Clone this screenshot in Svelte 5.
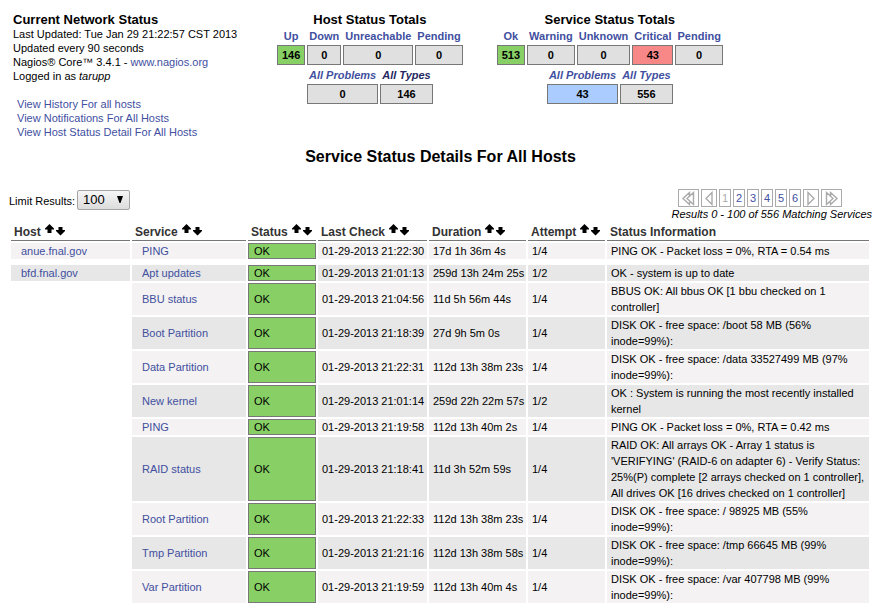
<script>
  const hostTotals = {
    title: 'Host Status Totals',
    items: [['Up', 146, 'ok'], ['Down', 0], ['Unreachable', 0], ['Pending', 0]],
    sums: [['All Problems', 0], ['All Types', 146, '', 'visited']]
  };
  const serviceTotals = {
    title: 'Service Status Totals',
    items: [['Ok', 513, 'ok'], ['Warning', 0], ['Unknown', 0], ['Critical', 43, 'critical'], ['Pending', 0]],
    sums: [['All Problems', 43, 'problems'], ['All Types', 556]]
  };
  const columns = [
    ['Host', 'host'], ['Service', 'service'], ['Status', 'status'], ['Last Check', 'last'],
    ['Duration', 'duration'], ['Attempt', 'attempt'], ['Status Information', 'info']
  ];
  const hosts = [
    { name: 'anue.fnal.gov', services: [
      ['PING', '21:22:30', '17d 1h 36m 4s', '1/4', 'PING OK - Packet loss = 0%, RTA = 0.54 ms']
    ] },
    { name: 'bfd.fnal.gov', services: [
      ['Apt updates', '21:01:13', '259d 13h 24m 25s', '1/2', 'OK - system is up to date'],
      ['BBU status', '21:04:56', '11d 5h 56m 44s', '1/4', 'BBUS OK: All bbus OK [1 bbu checked on 1 controller]'],
      ['Boot Partition', '21:18:39', '27d 9h 5m 0s', '1/4', 'DISK OK - free space: /boot 58 MB (56% inode=99%):'],
      ['Data Partition', '21:22:31', '112d 13h 38m 23s', '1/4', 'DISK OK - free space: /data 33527499 MB (97% inode=99%):'],
      ['New kernel', '21:01:14', '259d 22h 22m 57s', '1/2', 'OK : System is running the most recently installed kernel'],
      ['PING', '21:19:58', '112d 13h 40m 2s', '1/4', 'PING OK - Packet loss = 0%, RTA = 0.42 ms'],
      ['RAID status', '21:18:41', '11d 3h 52m 59s', '1/4', "RAID OK: All arrays OK - Array 1 status is 'VERIFYING' (RAID-6 on adapter 6) - Verify Status: 25%(P) complete [2 arrays checked on 1 controller], All drives OK [16 drives checked on 1 controller]"],
      ['Root Partition', '21:22:33', '112d 13h 38m 23s', '1/4', 'DISK OK - free space: / 98925 MB (55% inode=99%):'],
      ['Tmp Partition', '21:21:16', '112d 13h 38m 58s', '1/4', 'DISK OK - free space: /tmp 66645 MB (99% inode=99%):'],
      ['Var Partition', '21:19:59', '112d 13h 40m 4s', '1/4', 'DISK OK - free space: /var 407798 MB (99% inode=99%):']
    ] }
  ];
  // Stripes run on across host groups.
  let n = 0;
  const groups = hosts.map((h) => ({
    name: h.name,
    rows: h.services.map((s) => ({ s, odd: n++ % 2 === 1 }))
  }));
</script>

{#snippet totals(t)}
  <section class="totals">
    <h2>{t.title}</h2>
    <table>
      <thead><tr>{#each t.items as [label]}<th><a href="#status">{label}</a></th>{/each}</tr></thead>
      <tbody><tr>{#each t.items as [, value, kind]}<td class={kind}>{value}</td>{/each}</tr></tbody>
    </table>
    <table class="sums">
      <thead><tr>{#each t.sums as [label, , , link]}<th><a href="#status" class={link}>{label}</a></th>{/each}</tr></thead>
      <tbody><tr>{#each t.sums as [, value, kind]}<td class={kind}>{value}</td>{/each}</tr></tbody>
    </table>
  </section>
{/snippet}

<main>
  <header>
    <section class="network">
      <h2>Current Network Status</h2>
      <p>Last Updated: Tue Jan 29 21:22:57 CST 2013</p>
      <p>Updated every 90 seconds</p>
      <p>Nagios® Core™ 3.4.1 - <a href="#nagios">www.nagios.org</a></p>
      <p>Logged in as <i>tarupp</i></p>
      <nav>
        <a href="#history">View History For all hosts</a>
        <a href="#notifications">View Notifications For All Hosts</a>
        <a href="#hosts">View Host Status Detail For All Hosts</a>
      </nav>
    </section>
    {@render totals(hostTotals)}
    {@render totals(serviceTotals)}
  </header>

  <h1>Service Status Details For All Hosts</h1>

  <div class="controls">
    <div class="limit">
      <label for="limit">Limit Results:</label>
      <span class="select">
        <select id="limit"><option>100</option><option>250</option><option>All</option></select>
        <svg width="6" height="7" viewBox="0 0 6 7" aria-hidden="true"><path d="M0 0H6L3.5 7H2.5Z" /></svg>
      </span>
    </div>
    <div class="paging">
      <nav aria-label="Pages">
        <button class="double" aria-label="First page"><svg width="15" height="15" viewBox="0 0 15 15"><path d="M8.5 6V1.5L2 7.5L8.5 13.5V9M12.5 1.5L6 7.5L12.5 13.5Z" /></svg></button>
        <button class="single" aria-label="Previous page"><svg width="10" height="15" viewBox="0 0 10 15"><path d="M8 1.5V13.5L2 7.5Z" /></svg></button>
        <button class="current">1</button>
        {#each [2, 3, 4, 5, 6] as page}<button>{page}</button>{/each}
        <button class="single" aria-label="Next page"><svg width="10" height="15" viewBox="0 0 10 15"><path d="M2 1.5V13.5L8 7.5Z" /></svg></button>
        <button class="double" aria-label="Last page"><svg width="15" height="15" viewBox="0 0 15 15"><path d="M6.5 6V1.5L13 7.5L6.5 13.5V9M2.5 1.5L9 7.5L2.5 13.5Z" /></svg></button>
      </nav>
      <p>Results 0 - 100 of 556 Matching Services</p>
    </div>
  </div>

  <table class="services">
    <thead>
      <tr>
        {#each columns as [label, name]}
          <th class={name}>{label}{#if name !== 'info'}<svg class="sort" width="20" height="12" viewBox="0 0 20 12" role="img" aria-label="Sort"><path d="M4.5 0L9 4.5V5.5H6.5V9H2.5V5.5H0V4.5ZM13.5 3H17.5V6H20V7L15.5 11.5L11 7V6H13.5Z" /></svg>{/if}</th>
        {/each}
      </tr>
    </thead>
    {#each groups as group, g}
      <tbody>
        {#if g > 0}<tr class="gap"><td colspan="7"></td></tr>{/if}
        {#each group.rows as { s, odd }, i}
          <tr class:odd>
            {#if i === 0}<td class="link"><a href="#host">{group.name}</a></td>{:else}<td class="empty"></td>{/if}
            <td class="link"><a href="#service">{s[0]}</a></td>
            <td class="state">OK</td>
            <td>01-29-2013 {s[1]}</td>
            <td>{s[2]}</td>
            <td>{s[3]}</td>
            <td class="wrap">{s[4]}</td>
          </tr>
        {/each}
      </tbody>
    {/each}
  </table>
</main>

<style>
  :global(body) { margin: 0; background: #fff; }
  main { padding: 12px 3px 3px 9px; font: 11px/14px "Liberation Sans", Arial, sans-serif; color: #000; }
  h1, h2, p { margin: 0; }
  a { color: #414f9f; text-decoration: none; }
  header { display: grid; grid-template-columns: 262px auto auto; justify-content: start; padding-left: 4px; }
  .network h2, .totals h2 { font-size: 13px; line-height: 15px; }
  .network nav { display: flex; flex-direction: column; align-items: flex-start; margin: 14px 0 0 4px; }
  .totals { display: flex; flex-direction: column; align-items: center; margin-right: 30px; }
  .totals h2 { line-height: 16px; }
  .totals table { border-spacing: 2px; text-align: center; font-weight: bold; }
  .totals th { padding: 0 2px; line-height: 13px; }
  .totals td { padding: 0 4px; border: 1px solid #777; background: #e0e0e0; line-height: 18px; }
  .sums th { font-style: italic; }
  .totals .ok { background: #88d066; }
  .totals .critical { background: #f88888; }
  .totals .problems { background: #aaccff; }
  .visited { color: #25285f; }
  h1 { margin-top: 9px; text-align: center; font-size: 16px; line-height: 18px; }
  .controls { display: flex; justify-content: space-between; align-items: flex-start; margin-top: 23px; }
  .limit { display: flex; align-items: center; gap: 2px; padding-top: 1px; }
  .limit label { padding-top: 2px; }
  .select { position: relative; display: flex; }
  select { appearance: none; width: 53px; height: 20px; padding: 0 5px; border: 1px solid #a5a5a5; border-radius: 2px; background: linear-gradient(#f6f6f6, #dcdcdc); color: #000; font: 13px/18px "Liberation Sans", Arial, sans-serif; }
  .select svg { position: absolute; right: 7px; top: 6px; pointer-events: none; }
  .paging nav { display: flex; justify-content: flex-end; gap: 2px; padding-right: 30px; }
  button { box-sizing: border-box; width: 12px; height: 18px; display: flex; align-items: center; justify-content: center; padding: 0; border: 1px solid #aaa; background: #fff; color: #414f9f; font: 11px/14px "Liberation Sans", Arial, sans-serif; }
  button svg { flex: none; fill: none; stroke: #aaa; stroke-width: 1.4; }
  .current { color: #aaa; }
  .single { width: 16px; }
  .double { width: 21px; }
  .paging p { font-style: italic; }
  .services { table-layout: fixed; width: 100%; margin-top: 1px; border-spacing: 2px; padding-right: 1px; }
  .services th { padding: 0 3px; border-bottom: 1px solid #777; color: #333; font-size: 12px; line-height: 16px; text-align: left; white-space: nowrap; }
  .sort { margin-left: 4px; vertical-align: 0; fill: #000; }
  .host { width: 113px; }
  .service { width: 108px; }
  .status { width: 62px; }
  .last { width: 103px; }
  .duration { width: 91px; }
  .attempt { width: 71px; }
  .services td { padding: 0 4px; background: #f4f2f2; line-height: 16px; white-space: nowrap; }
  .services .odd td { background: #e7e7e7; }
  .services td.link { padding: 0 10px; }
  .services td.state, .services .odd td.state { padding: 0 5px; border: 1px solid #777; background: #88d066; line-height: 14px; }
  .services td.wrap { white-space: normal; }
  .services td.empty, .services .odd td.empty, .services .gap td { background: none; }
  .services .gap td { height: 2px; padding: 0; line-height: 0; }
</style>
